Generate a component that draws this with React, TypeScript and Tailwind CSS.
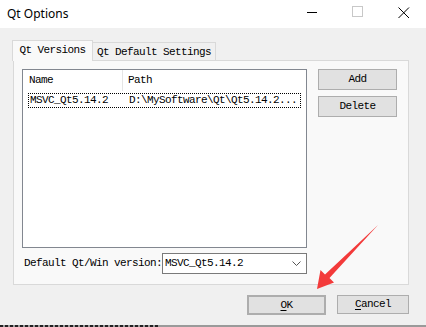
import React from "react";

const mono = "font-['SimSun','Liberation_Mono',monospace] text-[11px] tracking-[-0.6px] text-black";

function Btn({ children, className = "" }: { children: React.ReactNode; className?: string }) {
  return (
    <div
      className={`flex items-center justify-center border border-[#adadad] bg-[#e1e1e1] ${mono} ${className}`}
    >
      {children}
    </div>
  );
}

function TitleBar() {
  return (
    <div className="flex h-[28px] items-center bg-white pl-[7px]">
      <span className="font-['Noto_Sans',sans-serif] text-[12px] leading-none text-black">Qt Options</span>
      <div className="ml-auto flex items-center">
        <svg width="46" height="28" viewBox="0 0 46 28">
          <line x1="19" y1="12.5" x2="29" y2="12.5" stroke="#000" strokeWidth="1" />
        </svg>
        <svg width="46" height="28" viewBox="0 0 46 28">
          <rect x="18.5" y="6.5" width="10" height="10" fill="none" stroke="#c8c8c8" strokeWidth="1" />
        </svg>
        <svg width="46" height="28" viewBox="0 0 46 28">
          <path d="M18.5 7.5 L29 18 M29 7.5 L18.5 18" stroke="#000" strokeWidth="1" />
        </svg>
      </div>
    </div>
  );
}

function ListView() {
  return (
    <div className="flex h-[179px] w-[285px] flex-col border border-[#828790] bg-white">
      <div className="flex h-[21px] items-center">
        <div className={`flex h-full w-[100px] items-center border-r border-[#e5e5e5] pl-[6px] ${mono}`}>Name</div>
        <div className={`pl-[5px] ${mono}`}>Path</div>
      </div>
      <div className="mx-[5px] mt-[2px] flex h-[15px] items-center border border-dotted border-black">
        <div className={`w-[100px] pl-[1px] ${mono}`}>MSVC_Qt5.14.2</div>
        <div className={mono}>D:\MySoftware\Qt\Qt5.14.2...</div>
      </div>
    </div>
  );
}

export default function App() {
  return (
    <div className="relative h-[327px] w-[426px] overflow-hidden bg-[#f0f0f0]">
      <TitleBar />
      <div className="flex h-[297px] flex-col">
        {/* tabs */}
        <div className="ml-[12px] mt-[12px] flex items-end">
          <div className={`relative z-10 -mb-px flex h-[21px] w-[81px] items-center justify-center border border-b-0 border-[#d9d9d9] bg-[#f9f9f9] pb-[1px] ${mono}`}>
            Qt Versions
          </div>
          <div className={`flex h-[18px] w-[123px] items-center justify-center border border-l-0 border-b-0 border-[#d9d9d9] bg-[#f0f0f0] pt-[2px] ${mono}`}>
            Qt Default Settings
          </div>
        </div>
        <div className="ml-[13px] flex h-[225px] w-[396px] flex-col border border-[#d9d9d9] bg-[#f9f9f9] pl-[8px] pt-[8px]">
          <div className="flex">
            <ListView />
            <div className="ml-[11px] flex flex-col gap-[6px]">
              <Btn className="h-[21px] w-[79px]">Add</Btn>
              <Btn className="h-[21px] w-[79px]">Delete</Btn>
            </div>
          </div>
          <div className="mt-[5px] flex items-center">
            <span className={`pl-[2px] ${mono}`}>Default Qt/Win version:</span>
            <div className="flex h-[21px] w-[145px] items-center border border-[#7a7a7a] bg-white pl-[2px]">
              <span className={mono}>MSVC_Qt5.14.2</span>
              <svg width="9" height="6" viewBox="0 0 9 6" className="ml-auto mr-[5px]">
                <path d="M0.5 0.5 L4.5 4.5 L8.5 0.5" fill="none" stroke="#555" strokeWidth="1" />
              </svg>
            </div>
          </div>
        </div>
        <div className="mt-[10px] flex">
          <Btn className="ml-[247px] h-[20px] w-[79px] border-2 border-[#0078d7]">
            <span className="underline underline-offset-2">O</span>K
          </Btn>
          <Btn className="ml-[11px] h-[19px] w-[72px]">
            <span className="underline underline-offset-2">C</span>ancel
          </Btn>
        </div>
      </div>
      <div className="flex h-[2px] bg-[#9a9a9a]">
        <div className="h-full w-[160px] bg-[repeating-linear-gradient(90deg,#222_0_3px,#9a9a9a_3px_5px)]" />
      </div>
      <svg className="pointer-events-none absolute left-0 top-0" width="426" height="327" viewBox="0 0 426 327">
        <polygon points="378,225 329.5,278 334,282.5 317,289 320.5,270 325,274.5" fill="#f33a3a" />
      </svg>
    </div>
  );
}
